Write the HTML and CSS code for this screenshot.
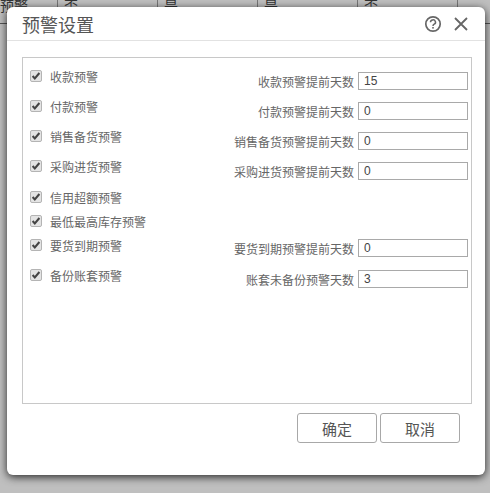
FILE: index.html
```html
<!DOCTYPE html>
<html lang="zh-CN">

<head>
    <meta charset="UTF-8">
    <title>预警设置</title>
    <link rel="stylesheet" href="styles.css">
</head>

<body>
    <div class="backdrop-row">
        <div class="cell cell-first">预警</div>
        <div class="cell">否</div>
        <div class="cell">是</div>
        <div class="cell">是</div>
        <div class="cell">否</div>
    </div>

    <div class="dialog">
        <div class="dialog-header">
            <span class="dialog-title">预警设置</span>
            <svg class="icon-help" width="18" height="18" viewBox="0 0 18 18">
                <circle cx="9" cy="9" r="7.2" fill="none" stroke="#666" stroke-width="1.7" />
                <path d="M6.5 7.2a2.5 2.3 0 1 1 3.7 2c-.9.5-1.2 1-1.2 1.9" fill="none" stroke="#666" stroke-width="1.5" />
                <rect x="8.2" y="12" width="1.6" height="1.6" fill="#666" />
            </svg>
            <svg class="icon-close" width="16" height="16" viewBox="0 0 16 16">
                <path d="M2 2l12 12M14 2L2 14" fill="none" stroke="#666" stroke-width="1.8" />
            </svg>
        </div>

        <div class="panel">
            <div class="panel-row row-30">
                <label class="check"><span class="box"><svg width="10" height="10" viewBox="0 0 10 10"><path d="M1.6 5l2.2 2.5L8.4 2" /></svg></span>收款预警</label>
                <div class="field"><span>收款预警提前天数</span><input type="text" value="15"></div>
            </div>
            <div class="panel-row row-30">
                <label class="check"><span class="box"><svg width="10" height="10" viewBox="0 0 10 10"><path d="M1.6 5l2.2 2.5L8.4 2" /></svg></span>付款预警</label>
                <div class="field"><span>付款预警提前天数</span><input type="text" value="0"></div>
            </div>
            <div class="panel-row row-30">
                <label class="check"><span class="box"><svg width="10" height="10" viewBox="0 0 10 10"><path d="M1.6 5l2.2 2.5L8.4 2" /></svg></span>销售备货预警</label>
                <div class="field"><span>销售备货预警提前天数</span><input type="text" value="0"></div>
            </div>
            <div class="panel-row row-31">
                <label class="check"><span class="box"><svg width="10" height="10" viewBox="0 0 10 10"><path d="M1.6 5l2.2 2.5L8.4 2" /></svg></span>采购进货预警</label>
                <div class="field"><span>采购进货预警提前天数</span><input type="text" value="0"></div>
            </div>
            <div class="panel-row row-24">
                <label class="check"><span class="box"><svg width="10" height="10" viewBox="0 0 10 10"><path d="M1.6 5l2.2 2.5L8.4 2" /></svg></span>信用超额预警</label>
            </div>
            <div class="panel-row row-24">
                <label class="check"><span class="box"><svg width="10" height="10" viewBox="0 0 10 10"><path d="M1.6 5l2.2 2.5L8.4 2" /></svg></span>最低最高库存预警</label>
            </div>
            <div class="panel-row row-30">
                <label class="check"><span class="box"><svg width="10" height="10" viewBox="0 0 10 10"><path d="M1.6 5l2.2 2.5L8.4 2" /></svg></span>要货到期预警</label>
                <div class="field field-mid"><span>要货到期预警提前天数</span><input type="text" value="0"></div>
            </div>
            <div class="panel-row row-30">
                <label class="check"><span class="box"><svg width="10" height="10" viewBox="0 0 10 10"><path d="M1.6 5l2.2 2.5L8.4 2" /></svg></span>备份账套预警</label>
                <div class="field field-low"><span>账套未备份预警天数</span><input type="text" value="3"></div>
            </div>
        </div>

        <div class="dialog-footer">
            <button class="btn">确定</button>
            <button class="btn">取消</button>
        </div>
    </div>
</body>

</html>
```

FILE: styles.css
```css
html,
body {
    margin: 0;
    padding: 0;
    height: 493px;
    overflow: hidden;
}

body {
    position: relative;
    background-color: #bfbfbf;
    font-family: "Liberation Sans", "Noto Sans CJK SC", sans-serif;
    font-size: 12px;
    color: #666;
}

.backdrop-row {
    display: flex;
    height: 23px;
    border-bottom: 1px solid #555;
    color: #333;
    font-size: 14px;
    line-height: 12px;
}

.cell {
    width: 100px;
    box-sizing: border-box;
    padding-left: 6px;
    border-right: 1px solid #777;
    overflow: hidden;
}

.cell-first {
    width: 58px;
    padding-left: 0;
}

.dialog {
    position: absolute;
    top: 7px;
    left: 7px;
    width: 478px;
    height: 468px;
    display: flex;
    flex-direction: column;
    background-color: #fff;
    border-radius: 6px;
    box-shadow: 0 2px 8px rgba(0, 0, 0, 0.8);
}

.dialog-header {
    display: flex;
    align-items: center;
    height: 33px;
    padding: 0 16px 0 15px;
    border-bottom: 1px solid #e2e2e2;
}

.dialog-title {
    flex: 1;
    font-size: 18px;
    color: #555;
}

.icon-help {
    margin-right: 11px;
}

.panel {
    height: 347px;
    box-sizing: border-box;
    margin: 16px 13px 0 15px;
    padding: 8px 3px 0 7px;
    border: 1px solid #c8c8c8;
}

.panel-row {
    display: flex;
    justify-content: space-between;
    align-items: flex-start;
}

.row-30 {
    height: 30px;
}

.row-31 {
    height: 31px;
}

.row-24 {
    height: 24px;
}

.check {
    display: flex;
    align-items: center;
    height: 20px;
    font-size: 12px;
}

.box {
    width: 10px;
    height: 10px;
    display: flex;
    margin-right: 8px;
    border: 1px solid #b4b4b4;
    border-radius: 2px;
    background-color: #e4e4e4;
}

.box path {
    fill: none;
    stroke: #444;
    stroke-width: 2;
}

.field {
    display: flex;
    align-items: center;
    margin-top: 6px;
}

.field-mid {
    margin-top: 4px;
}

.field-low {
    margin-top: 5px;
}

.field input {
    width: 110px;
    height: 18px;
    box-sizing: border-box;
    margin-left: 4px;
    padding: 0 5px;
    border: 1px solid #a9a9a9;
    font-family: inherit;
    font-size: 12px;
    color: #444;
}

.dialog-footer {
    display: flex;
    justify-content: flex-end;
    gap: 3px;
    padding: 9px 25px 0 0;
}

.btn {
    width: 80px;
    height: 30px;
    padding: 0;
    background-color: #fff;
    border: 1px solid #a8a8a8;
    border-radius: 3px;
    font-family: inherit;
    font-size: 15px;
    color: #555;
}
```
